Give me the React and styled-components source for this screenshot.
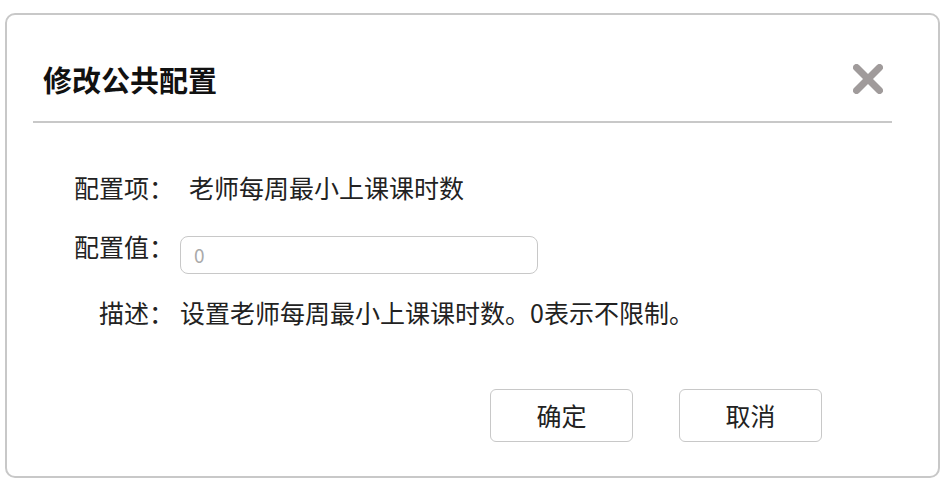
import React from "react";
import styled, { createGlobalStyle } from "styled-components";

const Global = createGlobalStyle`
  html, body { margin: 0; padding: 0; background: #fff; }
  body { font-family: "Noto Sans CJK SC", "Noto Sans", sans-serif; color: #222; }
  * { box-sizing: border-box; }
`;

const Dialog = styled.div`
  margin: 13px 0 0 5px;
  width: 935px;
  height: 465px;
  border: 2px solid #c8c8c8;
  border-radius: 10px;
  background: #fff;
  display: flex;
  flex-direction: column;
`;

const Header = styled.div`
  height: 106px;
  padding: 22px 55px 0 36px;
  display: flex;
  align-items: center;
  justify-content: space-between;
`;

const Title = styled.h2`
  margin: 0;
  font-size: 29px;
  font-weight: 700;
  color: #111;
  line-height: 1;
`;

const CloseButton = styled.button`
  border: none;
  background: none;
  padding: 0;
  width: 30px;
  height: 30px;
  display: flex;
  cursor: pointer;
`;

const Divider = styled.div`
  height: 2px;
  background: #c8c8c8;
  margin: 0 46px 0 26px;
`;

const Form = styled.div`
  display: grid;
  grid-template-columns: 167px 1fr;
  column-gap: 6px;
  padding-top: 46px;
  font-size: 25px;
`;

const Label = styled.div`
  text-align: right;
  line-height: ${(p) => (p.$compact ? "25px" : "36px")};
  margin-top: ${(p) => p.$mt || 0}px;
`;

const Value = styled.div`
  line-height: 36px;
  padding-left: ${(p) => p.$indent || 0}px;
  margin-top: ${(p) => p.$mt || 0}px;
`;

const Input = styled.input`
  width: 358px;
  height: 38px;
  border: 1.5px solid #c8c8c8;
  border-radius: 8px;
  padding: 0 13px;
  font-family: "Noto Sans CJK SC", "Noto Sans", sans-serif;
  font-size: 19px;
  color: #222;
  outline: none;
  &::placeholder { color: #aaa; }
`;

const Footer = styled.div`
  display: flex;
  justify-content: flex-end;
  gap: 46px;
  padding-right: 116px;
  margin-top: 59px;
`;

const Button = styled.button`
  width: 143px;
  height: 53px;
  border: 1.5px solid #c8c8c8;
  border-radius: 6px;
  background: #fff;
  font-family: "Noto Sans CJK SC", "Noto Sans", sans-serif;
  font-size: 25px;
  color: #222;
  cursor: pointer;
`;

const CloseIcon = () => (
  <svg width="30" height="30" viewBox="0 0 30 30">
    <g stroke="#a09b9b" strokeWidth="7" strokeLinecap="round">
      <line x1="3.5" y1="3.5" x2="26.5" y2="26.5" />
      <line x1="26.5" y1="3.5" x2="3.5" y2="26.5" />
    </g>
  </svg>
);

export default function App() {
  return (
    <>
      <Global />
      <Dialog>
        <Header>
          <Title>修改公共配置</Title>
          <CloseButton aria-label="关闭">
            <CloseIcon />
          </CloseButton>
        </Header>
        <Divider />
        <Form>
          <Label>配置项：</Label>
          <Value $indent={9}>老师每周最小上课课时数</Value>
          <Label $compact $mt={29}>配置值：</Label>
          <Value $mt={29}>
            <Input placeholder="0" />
          </Value>
          <Label $mt={20}>描述：</Label>
          <Value $mt={20}>设置老师每周最小上课课时数。0表示不限制。</Value>
        </Form>
        <Footer>
          <Button>确定</Button>
          <Button>取消</Button>
        </Footer>
      </Dialog>
    </>
  );
}
